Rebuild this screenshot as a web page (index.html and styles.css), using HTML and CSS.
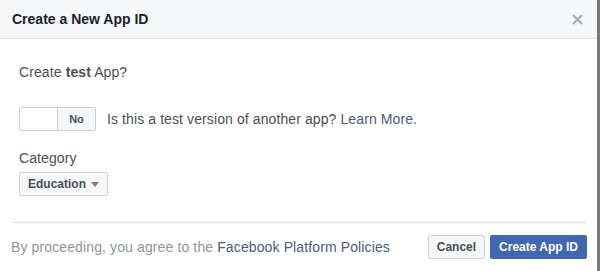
FILE: index.html
```html
<!DOCTYPE html>
<html lang="en">
<head>
    <meta charset="UTF-8">
    <title>Create a New App ID</title>
    <link rel="stylesheet" href="styles.css">
</head>
<body>
    <div class="dialog">
        <div class="dialog-header">
            <h2>Create a New App ID</h2>
            <span class="close">
                <svg width="11" height="11" viewBox="0 0 11 11"><path d="M1 1 L10 10 M10 1 L1 10" stroke="#a7abb1" stroke-width="2"/></svg>
            </span>
        </div>
        <div class="dialog-body">
            <p class="question">Create <strong>test</strong> App?</p>
            <div class="toggle-row">
                <div class="toggle">
                    <span class="toggle-off"></span>
                    <span class="toggle-no">No</span>
                </div>
                <span class="toggle-label">Is this a test version of another app? <a href="#">Learn More.</a></span>
            </div>
            <label class="field-label">Category</label>
            <button class="select">Education <span class="caret"></span></button>
        </div>
        <div class="dialog-footer">
            <span class="terms">By proceeding, you agree to the <a href="#">Facebook Platform Policies</a></span>
            <div class="actions">
                <button class="btn">Cancel</button>
                <button class="btn btn-primary">Create App ID</button>
            </div>
        </div>
    </div>
</body>
</html>
```

FILE: styles.css
```css
body {
    margin: 0;
    font-family: "Liberation Sans", Arial, sans-serif;
    background-color: #fff;
}
.dialog {
    width: 597px;
    height: 271px;
    border-right: 3px solid #7a7a7a;
    background-color: #fff;
}
.dialog-header {
    display: flex;
    justify-content: space-between;
    align-items: center;
    height: 38px;
    padding: 0 14px 0 12px;
    background-color: #f6f7f9;
    border-bottom: 1px solid #e5e5e5;
}
.dialog-header h2 {
    margin: 0;
    font-size: 14px;
    font-weight: bold;
    color: #1d2129;
}
.close {
    display: flex;
    margin-top: 1px;
}
.dialog-body {
    padding: 24px 19px 0;
    color: #4b4f56;
    font-size: 14px;
    letter-spacing: 0.1px;
}
.question {
    margin: 0;
    line-height: 18px;
}
.question strong {
    color: #4b4f56;
}
.toggle-row {
    display: flex;
    align-items: center;
    margin-top: 26px;
}
.toggle {
    display: flex;
    height: 22px;
    border: 1px solid #ccd0d5;
    border-radius: 2px;
}
.toggle-off {
    width: 37px;
    border-right: 1px solid #ccd0d5;
}
.toggle-no {
    width: 37px;
    background-color: #f6f7f9;
    font-size: 11px;
    font-weight: bold;
    line-height: 22px;
    text-align: center;
    color: #4b4f56;
    letter-spacing: 0;
}
.toggle-label {
    margin-left: 11px;
}
a {
    color: #4e5a78;
    text-decoration: none;
}
.field-label {
    display: block;
    margin-top: 18px;
    line-height: 18px;
}
.select {
    display: flex;
    align-items: center;
    margin-top: 5px;
    height: 24px;
    padding: 0 8px;
    background-color: #f6f7f9;
    border: 1px solid #ced0d4;
    border-radius: 2px;
    font-family: inherit;
    font-size: 12px;
    font-weight: bold;
    color: #4b4f56;
    letter-spacing: 0;
}
.caret {
    margin-left: 5px;
    border-left: 4px solid transparent;
    border-right: 4px solid transparent;
    border-top: 5px solid #7f7f7f;
}
.dialog-footer {
    display: flex;
    justify-content: space-between;
    align-items: center;
    margin: 26px 10px 0 11px;
    padding-top: 12px;
    border-top: 1px solid #dddfe2;
}
.terms {
    font-size: 14px;
    color: #90949c;
    letter-spacing: 0.12px;
}
.actions {
    display: flex;
    gap: 5px;
}
.btn {
    height: 24px;
    padding: 0 8px;
    background-color: #f6f7f9;
    border: 1px solid #ced0d4;
    border-radius: 2px;
    font-family: inherit;
    font-size: 12px;
    font-weight: bold;
    color: #4b4f56;
}
.btn-primary {
    background-color: #4267b2;
    border-color: #4267b2;
    color: #fff;
}
```
